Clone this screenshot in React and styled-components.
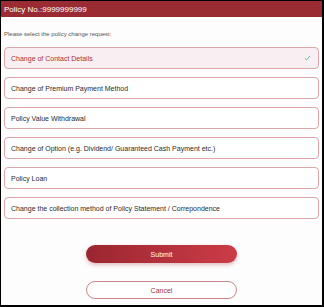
import styled, { createGlobalStyle } from 'styled-components'

const Global = createGlobalStyle`
  body {
    margin: 0;
    font-family: "Liberation Sans", Arial, sans-serif;
    background: #fff;
  }
`

const Frame = styled.div`
  width: 324px;
  height: 307px;
  box-sizing: border-box;
  border-style: solid;
  border-color: #000;
  border-width: 1px 2px 2px 1px;
  background: #fdfdfd;
  display: flex;
  flex-direction: column;
`

const Header = styled.header`
  height: 16px;
  background: #9b2b33;
  color: #fff;
  display: flex;
  align-items: center;
  padding-left: 3px;
  font-size: 8px;
  font-weight: 500;
`

const Hint = styled.p`
  margin: 14px 0 0 3px;
  font-size: 6px;
  color: #555;
`

const List = styled.ul`
  list-style: none;
  margin: 10px 0 0;
  padding: 0 3px;
  display: flex;
  flex-direction: column;
  gap: 8px;
`

const Option = styled.li`
  height: 22px;
  box-sizing: border-box;
  border: 1px solid #dca6ab;
  border-radius: 4px;
  background: ${({ selected }) => (selected ? '#f7eff1' : '#fff')};
  color: ${({ selected }) => (selected ? '#a8303c' : '#2b2b2b')};
  display: flex;
  align-items: center;
  justify-content: space-between;
  padding: 0 7px 0 6px;
  font-size: 7px;
  font-weight: 500;
`

const Check = () => (
  <svg width='7' height='6' viewBox='0 0 7 6'>
    <path d='M0.8 3.2 L2.6 4.9 L6.2 0.9' fill='none' stroke='#6fb0ab' strokeWidth='1' />
  </svg>
)

const Actions = styled.div`
  display: flex;
  flex-direction: column;
  align-items: center;
  gap: 18px;
  margin-top: 26px;
`

const Button = styled.button`
  width: 151px;
  height: 18px;
  border-radius: 9px;
  font-family: inherit;
  font-size: 7px;
  padding: 0;
  cursor: pointer;
  border: ${({ primary }) => (primary ? 'none' : '1px solid #c98489')};
  background: ${({ primary }) =>
    primary ? 'linear-gradient(90deg, #9a2631, #cc3c47)' : '#fff'};
  color: ${({ primary }) => (primary ? '#fff' : '#a3323d')};
  box-shadow: ${({ primary }) => (primary ? '0 2px 4px rgba(160, 40, 50, 0.3)' : 'none')};
`

const options = [
  'Change of Contact Details',
  'Change of Premium Payment Method',
  'Policy Value Withdrawal',
  'Change of Option (e.g. Dividend/ Guaranteed Cash Payment etc.)',
  'Policy Loan',
  'Change the collection method of Policy Statement / Correpondence',
]

export default function App() {
  return (
    <Frame>
      <Global />
      <Header>Policy No.:9999999999</Header>
      <Hint>Please select the policy change request:</Hint>
      <List>
        {options.map((o, i) => (
          <Option key={o} selected={i === 0}>
            <span>{o}</span>
            {i === 0 && <Check />}
          </Option>
        ))}
      </List>
      <Actions>
        <Button primary>Submit</Button>
        <Button>Cancel</Button>
      </Actions>
    </Frame>
  )
}
